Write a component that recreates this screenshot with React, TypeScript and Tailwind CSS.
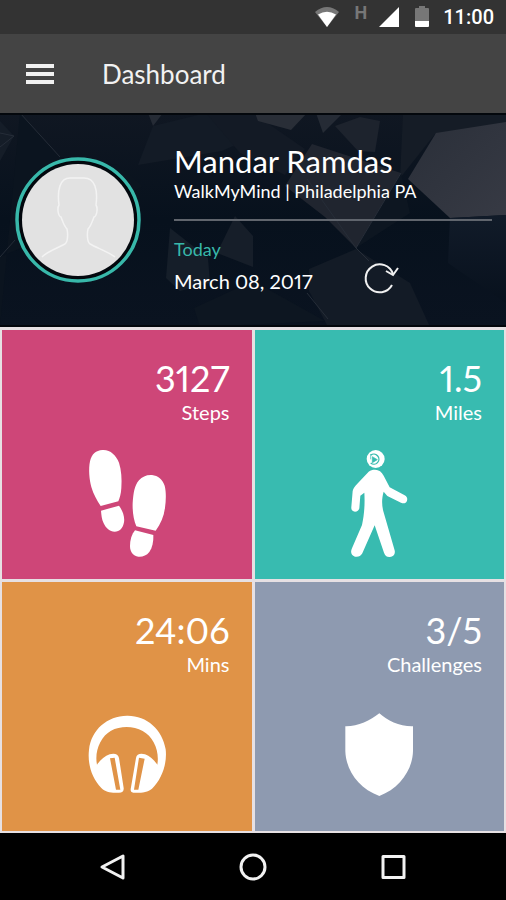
import type { ReactNode } from "react";

const StatusBar = () => (
  <div className="flex justify-end items-center pr-3 h-[34px] text-white bg-[#333333]">
    <svg className="w-6 h-5" viewBox="0 0 24 20" aria-hidden="true">
      <path d="M0 5 Q12 -5 24 5 L12 20Z" fill="#777777" />
      <path d="M3 7.500 Q12 2 21 7.500 L12 20Z" fill="#ffffff" />
    </svg>
    <span className="mb-2 ml-4 text-lg font-bold leading-4 text-[#777777] font-['Roboto']">H</span>
    <svg className="ml-3 w-5 h-5" viewBox="0 0 20 20" aria-hidden="true">
      <path d="M20 0V20H0Z" fill="#ffffff" />
    </svg>
    <svg className="ml-4 w-[14px] h-[22px]" viewBox="0 0 14 22" aria-hidden="true">
      <path d="M4 0H10V2H13Q14 2 14 3V15H0V3Q0 2 1 2H4Z" fill="#777777" />
      <path d="M0 15H14V20Q14 21 13 21H1Q0 21 0 20Z" fill="#ffffff" />
    </svg>
    <span className="ml-[14px] text-xl font-medium leading-6 font-['Roboto']">11:00</span>
  </div>
);

const AppBar = () => (
  <header className="flex items-center px-[26px] h-[79px] bg-[#444444]">
    <button type="button" aria-label="Menu" className="flex flex-col gap-1">
      <span className="w-7 h-1 bg-[#f2f2f2]" />
      <span className="w-7 h-1 bg-[#f2f2f2]" />
      <span className="w-7 h-1 bg-[#f2f2f2]" />
    </button>
    <h1 className="ml-12 text-[26px] leading-8 text-[#f2f2f2]">Dashboard</h1>
  </header>
);

const HeroBackground = () => (
  <svg
    className="absolute inset-0 w-full h-full"
    viewBox="0 0 506 214"
    preserveAspectRatio="xMidYMid slice"
    aria-hidden="true"
  >
    <defs>
      <linearGradient id="heroBase" x1="0" y1="0" x2="0" y2="1">
        <stop offset="0" stopColor="#101722" />
        <stop offset="0.5" stopColor="#07111d" />
        <stop offset="1" stopColor="#0a1320" />
      </linearGradient>
      <linearGradient id="heroRock" x1="0" y1="0" x2="1" y2="1">
        <stop offset="0" stopColor="#2a2f39" />
        <stop offset="1" stopColor="#373a44" />
      </linearGradient>
      <linearGradient id="heroCorner" x1="0" y1="0" x2="0" y2="1">
        <stop offset="0" stopColor="#111b29" />
        <stop offset="1" stopColor="#08111d" />
      </linearGradient>
    </defs>
    <rect width="506" height="214" fill="url(#heroBase)" />
    <path d="M0 8L14 23L0 48Z" fill="#151d28" />
    <path d="M20 0L60 44L118 52L143 73L80 110L0 144V214H0Z" fill="#0b141f" />
    <path d="M148 0H163L153 13Z" fill="#252b35" />
    <path d="M153 13L206 0L253 24L222 38L138 52Z" fill="#131b26" />
    <path d="M206 0H253L305 36L285 62L240 40Z" fill="#131a25" />
    <path d="M255 0H307L291 17L258 8Z" fill="#292e37" />
    <path d="M316 0H343L323 20Z" fill="#252b35" />
    <path d="M335 13L360 4L380 8L375 39L358 38Z" fill="#1d232d" />
    <path d="M410 0H506V18L435 21L400 65L403 0Z" fill="#151c26" />
    <path d="M436 20L506 9V102L450 105L408 66Z" fill="url(#heroRock)" />
    <path d="M312 31L401 60L356 135L325 104L285 73Z" fill="#20252f" />
    <path d="M401 60L356 135L410 100Z" fill="#0d1621" />
    <path d="M309 156L356 136L410 170L430 214H328L309 178Z" fill="#131b26" />
    <path d="M450 105L506 102V190L448 150Z" fill="url(#heroCorner)" />
    <path d="M170 115L208 145L210 170L180 178L166 165Z" fill="#151e29" />
    <path d="M217 140L235 103L253 123V154Z" fill="#161e29" />
    <path d="M194 195L253 168L325 208L200 214Z" fill="#0d1621" />
    <path
      d="M0 20L14 23M0 34L14 23M0 144L15 127M20 0L60 44M356 135L401 60M356 135L369 148M307 66L356 135M307 180L328 206"
      fill="none"
      stroke="#262d38"
    />
    <path d="M0 1H506M0 213H506" stroke="#03070c" strokeWidth="2" />
  </svg>
);

const Avatar = () => (
  <svg className="w-32 h-32 shrink-0" viewBox="0 0 128 128" role="img" aria-label="Profile photo">
    <circle cx="64" cy="64" r="61" fill="#02070d" stroke="#38b8aa" strokeWidth="3.500" />
    <circle cx="64" cy="64" r="56" fill="#e2e2e2" />
    <path
      d="M28 101C34 95 44 92 51 88C54 86 54 77 53 73C50 70 49 66 47 61C44 60 43 52 45 49C43 34 46 22 56 22H70C81 22 84 34 82 49C84 52 83 60 80 61C78 66 77 70 74 73C73 77 73 86 76 88C83 92 95 96 101 101"
      fill="none"
      stroke="#f3f3f3"
      strokeWidth="1.500"
    />
  </svg>
);

const Profile = () => (
  <section className="relative h-[214px] bg-[#09121e]">
    <HeroBackground />
    <div className="flex relative items-center pr-[14px] pl-[14px] h-full text-white">
      <Avatar />
      <div className="ml-8 grow">
        <h2 className="text-[31px] leading-9">Mandar Ramdas</h2>
        <p className="text-lg leading-6">WalkMyMind | Philadelphia PA</p>
        <hr className="mt-4 border-t-2 border-[#60656d]" />
        <div className="flex items-end mt-3">
          <div>
            <p className="text-lg leading-8 text-[#38b8aa]">Today</p>
            <p className="text-xl leading-8 proportional-nums">March 08, 2017</p>
          </div>
          <button type="button" aria-label="Refresh" className="ml-[52px]">
            <svg className="w-9 h-9" viewBox="0 0 36 36" fill="none" stroke="#f0f0f0" strokeWidth="2">
              <path d="M28 24A14 14 0 1 1 29 13" />
              <path d="M22 10L29 14L34 7" />
            </svg>
          </button>
        </div>
      </div>
    </div>
  </section>
);

type TileProps = {
  value: string;
  label: string;
  color: string;
  viewBox: string;
  children: ReactNode;
};

const Tile = ({ value, label, color, viewBox, children }: TileProps) => (
  <article className={`flex flex-col h-[249px] pt-6 text-white ${color}`}>
    <div className="pr-[22px] text-right">
      <p className="text-4xl leading-[48px] proportional-nums">{value}</p>
      <p className="text-xl leading-5">{label}</p>
    </div>
    <svg className="mx-auto mt-[25px] w-[120px] h-28" viewBox={viewBox} fill="#ffffff" aria-hidden="true">
      {children}
    </svg>
  </article>
);

const Tiles = () => (
  <main className="grid grid-cols-2 gap-[3px] px-[2px] pt-[3px] pb-[2px] bg-[#e6e0e3]">
    <Tile value="3127" label="Steps" color="bg-[#ce4678]" viewBox="-9 51 360 336">
      <path d="M97 60C120 58 138 75 147 98C154 120 156 147 154 174C153 192 149 205 145 214L92 228C81 211 70 193 64 171C58 149 55 118 60 94C65 72 78 61 97 60Z" />
      <path d="M93 242L147 227C157 241 165 259 162 277C159 295 149 305 134 305C119 305 108 295 101 280C95 267 94 254 93 242Z" />
      <path d="M246 135C264 137 278 148 284 167C289 187 288 211 285 233C282 259 272 282 257 302L199 289C191 270 187 245 188 219C190 192 193 166 207 151C217 140 229 134 246 135Z" />
      <path d="M195 301L250 315C251 334 247 353 238 366C229 377 218 381 205 380C189 377 180 366 180 348C180 330 185 313 195 301Z" />
    </Tile>
    <Tile value="1.5" label="Miles" color="bg-[#38bbb0]" viewBox="-31 51 360 336">
      <circle cx="139" cy="87" r="27" />
      <path d="M124 76A15 15 0 1 1 124 99" fill="none" stroke="#38bbb0" strokeWidth="4" />
      <path d="M124 72L124 88M129 80L144 89L129 98Z" fill="#38bbb0" stroke="#38bbb0" strokeWidth="2" />
      <path d="M137 119C149 119 157 125 163 137L181 172L226 196C233 200 235 205 233 212C230 220 223 221 215 218L174 198L163 185C157 205 157 224 162 244L195 358C200 371 193 380 182 381C173 382 167 377 164 368L136 286L99 370C94 379 86 382 77 380C66 376 63 367 67 357L98 285C105 254 107 219 105 188L93 197L90 235C88 242 84 245 77 245C69 244 65 239 66 231L70 183C72 174 77 168 84 161L118 125C124 120 129 119 137 119Z" />
    </Tile>
    <Tile value="24:06" label="Mins" color="bg-[#e09347]" viewBox="-9 -3 360 336">
      <path
        fillRule="evenodd"
        d="M171 47C230 46 277 88 287 148C292 190 276 237 246 266C233 277 207 280 190 278C181 276 181 270 183 262L198 174C200 162 211 159 225 163C239 168 252 180 262 194C269 153 251 111 218 93C190 77 151 77 123 92C91 110 73 154 81 194C91 179 105 168 119 163C135 159 144 163 147 174L161 264C162 274 157 278 147 278C127 280 106 277 94 264C65 234 52 191 57 149C64 88 112 48 171 47ZM120 175L138 269H151L134 173ZM207 173L192 269H205L224 176Z"
      />
    </Tile>
    <Tile value="3/5" label="Challenges" color="bg-[#8e9ab0]" viewBox="-31 -3 360 336">
      <path d="M150 40C174 62 211 80 251 79V153C250 209 211 265 150 288C88 265 50 211 48 154V79C84 80 123 62 150 40Z" />
    </Tile>
  </main>
);

const NavBar = () => (
  <nav className="flex justify-around items-center px-[43px] h-[67px] bg-black">
    <button type="button" aria-label="Back">
      <svg className="w-7 h-7" viewBox="0 0 28 28" fill="none" stroke="#f2f2f2" strokeWidth="3" strokeLinejoin="round">
        <path d="M24 3V25L3 14Z" />
      </svg>
    </button>
    <button type="button" aria-label="Home">
      <svg className="w-7 h-7" viewBox="0 0 28 28" fill="none" stroke="#f2f2f2" strokeWidth="3">
        <circle cx="14" cy="14" r="12" />
      </svg>
    </button>
    <button type="button" aria-label="Recent apps">
      <svg className="w-7 h-7" viewBox="0 0 28 28" fill="none" stroke="#f2f2f2" strokeWidth="3" strokeLinejoin="round">
        <path d="M4 3.500H25V24.500H4Z" />
      </svg>
    </button>
  </nav>
);

export default function App() {
  return (
    <div className="font-['Lato',sans-serif]">
      <StatusBar />
      <AppBar />
      <Profile />
      <Tiles />
      <NavBar />
    </div>
  );
}
